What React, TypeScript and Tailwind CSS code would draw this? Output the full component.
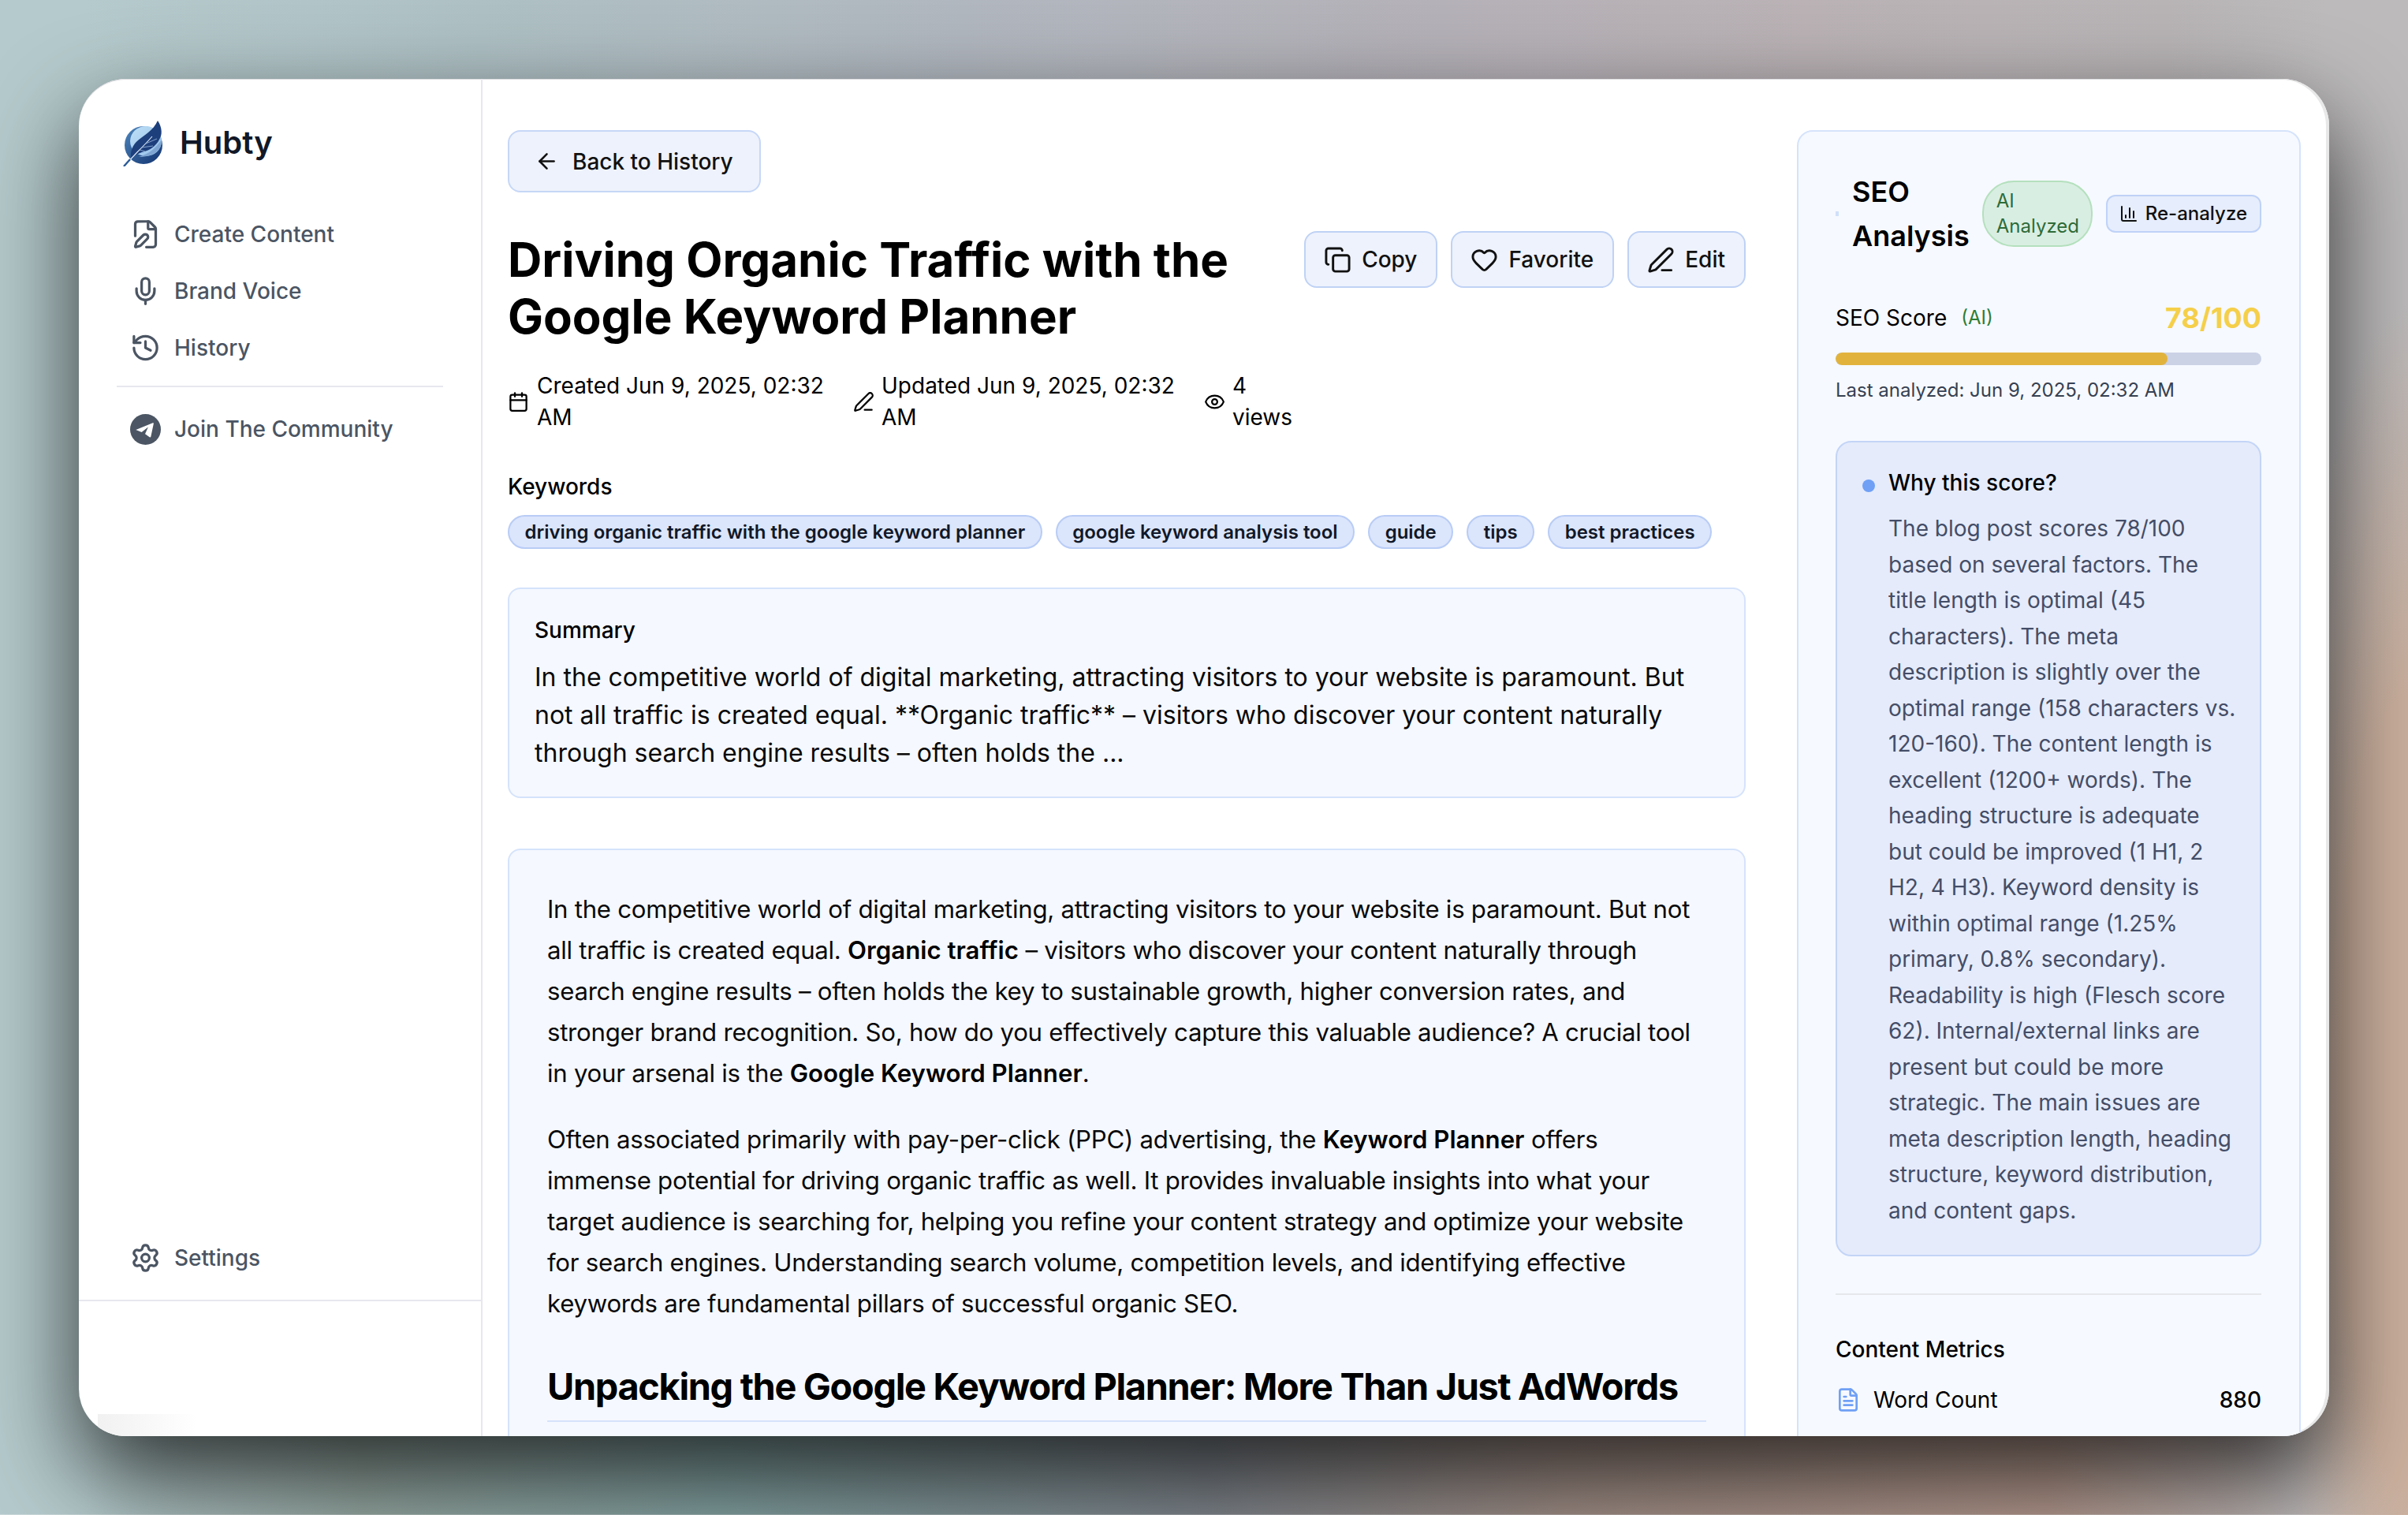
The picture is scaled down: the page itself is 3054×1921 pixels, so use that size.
import React from 'react';
import {
  ArrowLeft,
  Calendar,
  ChartColumn,
  Copy,
  Eye,
  FilePen,
  FileText,
  Heart,
  History,
  Mic,
  PenLine,
  Settings,
} from 'lucide-react';

const keywords = [
  'driving organic traffic with the google keyword planner',
  'google keyword analysis tool',
  'guide',
  'tips',
  'best practices',
];

const Logo = () => (
  <svg viewBox="0 0 60 60" className="w-[60px] h-[60px]">
    <defs>
      <linearGradient id="ring" x1="0" y1="0" x2="1" y2="1">
        <stop offset="0" stopColor="#4f86bd" />
        <stop offset="1" stopColor="#123470" />
      </linearGradient>
      <linearGradient id="sky" x1="0" y1="0" x2="1" y2="1">
        <stop offset="0" stopColor="#bfe0f7" />
        <stop offset="1" stopColor="#93bfe9" />
      </linearGradient>
    </defs>
    <circle cx="32" cy="33" r="24" fill="url(#ring)" />
    <ellipse cx="35" cy="28" rx="20" ry="19" fill="url(#sky)" />
    <path d="M55 26C56 38 46 48 26 48C40 44 48 36 55 26Z" fill="#7fa6d2" />
    <path d="M50 2C56 11 56 20 52 26C48 34 40 40 30 42C25 44 21 46 16 50C15 41 18 33 25 27C33 20 44 15 50 2Z" fill="#1d3f7c" />
    <path d="M7 60L24 42C30 36 36 30 43 22" fill="none" stroke="#e4eef8" strokeWidth="1.1" />
    <path d="M30 36L44 34M35 31L49 25M27 39L34 41" fill="none" stroke="#9dbbdf" strokeWidth="0.8" />
    <path d="M7 60L15 51" fill="none" stroke="#2b5a98" strokeWidth="2.4" />
  </svg>
);

const NavItem = ({ icon, label }: { icon: React.ReactNode; label: string }) => (
  <div className="flex items-center gap-[17px] h-[72px] pl-[17px] text-[28px] font-medium text-[#4b5563]">
    <span className="w-[39px] flex justify-center">{icon}</span>
    {label}
  </div>
);

const ActionButton = ({ icon, label }: { icon: React.ReactNode; label: string }) => (
  <button className="flex items-center gap-[13px] h-[72px] pl-[23px] pr-[24px] bg-[#eef2fc] border-2 border-[#bfd2f5] rounded-[16px] text-[28px] font-medium text-[#111]">
    {icon}
    {label}
  </button>
);

export default function App() {
  return (
    <div className="w-[3054px] h-[1921px] p-[100px] font-['Inter',sans-serif] overflow-hidden [background:radial-gradient(ellipse_170px_1000px_at_100%_72%,#cbb09e_0%,#cbb09e_50%,transparent_100%),linear-gradient(90deg,#b5cacc_0%,#b5cacc_3.5%,#aec0c4_20%,#b1b7bf_40%,#b5b1b8_60%,#bab2b5_75%,#b8b4b6_90%,#bcbabb_96.5%,#bcbabb_100%)_top/100%_51%_no-repeat,linear-gradient(90deg,#b5cacc_0%,#b5cacc_3.5%,#98aba5_15%,#84a3a3_30%,#80878e_50%,#a29088_65%,#b59a8f_85%,#bcbabb_96.5%,#bcbabb_100%)_bottom/100%_51%_no-repeat]">
      <div className="relative flex h-[1721px] w-[2854px] overflow-hidden rounded-[60px] bg-white shadow-[inset_-4px_0_0_#e8e8e8,inset_0_1px_0_#dcdce0,0_50px_120px_rgba(0,0,0,0.75)]">
        {/* Sidebar */}
        <aside className="flex flex-col w-[512px] shrink-0 border-r-2 border-[#e7e8ef]">
          <div className="flex items-center h-[161px] pl-[50px]">
            <Logo />
            <span className="ml-[18px] text-[40px] font-semibold text-[#111827]">Hubty</span>
          </div>
          <nav className="flex flex-col flex-1 px-[48px]">
            <NavItem icon={<FilePen size={40} strokeWidth={2} />} label="Create Content" />
            <NavItem icon={<Mic size={40} strokeWidth={2} />} label="Brand Voice" />
            <NavItem icon={<History size={40} strokeWidth={2} />} label="History" />
            <div className="h-[2px] mt-[12px] mb-[17px] bg-[#e7e8ef]" />
            <NavItem
              icon={
                <svg viewBox="0 0 40 40" className="w-[39px] h-[39px]">
                  <circle cx="20" cy="20" r="20" fill="#4b5563" />
                  <path d="M7.5 20.5L29.5 11.5C30.3 11.2 30.8 11.8 30.6 12.6L27 29.5C26.8 30.4 26 30.5 25.3 30L19.5 25.8L23.5 17L15 23.5Z" fill="#fff" />
                </svg>
              }
              label="Join The Community"
            />
            <div className="flex-1" />
            <NavItem icon={<Settings size={40} strokeWidth={2} />} label="Settings" />
          </nav>
          <div className="h-[173px] mt-[17px] border-t-2 border-[#e7e8ef]" />
        </aside>

        {/* Main */}
        <main className="w-[1602px] shrink-0 pl-[32px] pt-[65px] text-black">
          <button className="flex items-center gap-[17px] h-[79px] pl-[32px] pr-[33px] bg-[#eef2fc] border-2 border-[#c6d7f7] rounded-[16px] text-[28px] font-medium text-[#111]">
            <ArrowLeft size={31} strokeWidth={2} />
            Back to History
          </button>

          <div className="flex justify-between items-start mt-[49px]">
            <h1 className="text-[60px] leading-[72px] font-bold w-[980px]">
              Driving Organic Traffic with the Google Keyword Planner
            </h1>
            <div className="flex gap-[17px]">
              <ActionButton icon={<Copy size={35} strokeWidth={2} />} label="Copy" />
              <ActionButton icon={<Heart size={35} strokeWidth={2} />} label="Favorite" />
              <ActionButton icon={<PenLine size={35} strokeWidth={2} />} label="Edit" />
            </div>
          </div>

          <div className="flex items-center gap-[32px] mt-[32px] text-[28px] leading-[40px]">
            <div className="flex items-center gap-[10px]">
              <Calendar size={27} strokeWidth={2} className="shrink-0" />
              <span className="w-[369px]">Created Jun 9, 2025, 02:32 AM</span>
            </div>
            <div className="flex items-center gap-[9px]">
              <PenLine size={27} strokeWidth={2} className="shrink-0" />
              <span className="w-[377px]">Updated Jun 9, 2025, 02:32 AM</span>
            </div>
            <div className="flex items-center gap-[9px]">
              <Eye size={27} strokeWidth={2} className="shrink-0" />
              <span className="w-[78px]">4 views</span>
            </div>
          </div>

          <div className="mt-[48px] text-[28px] leading-[40px] font-medium">Keywords</div>
          <div className="flex gap-[17px] mt-[16px]">
            {keywords.map((k) => (
              <span
                key={k}
                className="h-[43px] px-[19.5px] flex items-center bg-[#dbe5fc] border-2 border-[#b8ccf5] rounded-full text-[24px] font-semibold text-[#111827] whitespace-nowrap"
              >
                {k}
              </span>
            ))}
          </div>

          <section className="mt-[49px] w-[1570px] px-[32px] pt-[32px] pb-[31px] bg-[#f5f8ff] border-2 border-[#d5e3fb] rounded-[16px]">
            <div className="text-[28px] leading-[40px] font-medium">Summary</div>
            <p className="mt-[16px] text-[32px] leading-[48px] text-[#0a0a0a]">
              In the competitive world of digital marketing, attracting visitors to your website is paramount. But not all traffic is created equal. **Organic traffic** – visitors who discover your content naturally through search engine results – often holds the ...
            </p>
          </section>

          <article className="mt-[64px] w-[1570px] h-[800px] px-[48px] pt-[49px] bg-[#f5f8ff] border-2 border-[#d5e3fb] rounded-[16px] text-[31.2px] leading-[52px] tracking-[-0.27px] text-[#0a0a0a]">
            <p>
              In the competitive world of digital marketing, attracting visitors to your website is paramount. But not all traffic is created equal. <strong className="font-semibold tracking-normal text-black">Organic traffic</strong> – visitors who discover your content naturally through search engine results – often holds the key to sustainable growth, higher conversion rates, and stronger brand recognition. So, how do you effectively capture this valuable audience? A crucial tool in your arsenal is the <strong className="font-semibold tracking-normal text-black">Google Keyword Planner</strong>.
            </p>
            <p className="mt-[32px]">
              Often associated primarily with pay-per-click (PPC) advertising, the <strong className="font-semibold tracking-normal text-black">Keyword Planner</strong> offers immense potential for driving organic traffic as well. It provides invaluable insights into what your target audience is searching for, helping you refine your content strategy and optimize your website for search engines. Understanding search volume, competition levels, and identifying effective keywords are fundamental pillars of successful organic SEO.
            </p>
            <h2 className="mt-[49px] pb-[13px] text-[46.8px] leading-[60px] tracking-[-1.3px] font-bold text-black border-b-2 border-[#d5e3fb] whitespace-nowrap">
              Unpacking the Google Keyword Planner: More Than Just AdWords
            </h2>
          </article>
        </main>

        {/* SEO panel */}
        <section className="w-[639px] h-[1800px] shrink-0 mt-[65px] ml-[65px] pl-[47px] pr-[48px] pt-[48px] bg-[#f6f9ff] border-2 border-[#d5e3fb] rounded-[20px] text-black">
          <div className="flex items-center h-[112px]">
            <span className="w-[4px] h-[6px] bg-[#cfe0f8]" />
            <h2 className="ml-[17px] w-[165px] text-[36px] leading-[56px] font-semibold">SEO Analysis</h2>
            <span className="w-[140px] h-[84px] shrink-0 pl-[16px] pr-[8px] flex items-center bg-[#d9eee2] border-2 border-[#b4e0bd] rounded-[40px] text-[24px] leading-[32px] text-[#2e6b38]">
              AI Analyzed
            </span>
            <button className="ml-[17px] flex items-center gap-[9px] h-[48px] pl-[15px] pr-[16px] bg-[#e6edfc] border-2 border-[#bfd2f7] rounded-[12px] text-[24px] font-medium text-[#111] whitespace-nowrap">
              <ChartColumn size={24} strokeWidth={2} />
              Re-analyze
            </button>
          </div>

          <div className="flex items-center justify-between mt-[48px] h-[56px]">
            <div className="flex items-center gap-[18px]">
              <span className="text-[28px]">SEO Score</span>
              <span className="text-[24px] text-[#2e7d32]">(AI)</span>
            </div>
            <span className="text-[36px] font-bold text-[#f5cf4a]">78/100</span>
          </div>

          <div className="mt-[16px] h-[16px] rounded-full bg-[#cbd2e6] overflow-hidden">
            <div className="h-full w-[78%] rounded-full bg-[#e2b33c]" />
          </div>
          <div className="mt-[16px] text-[24px] leading-[32px] text-[#374151]">
            Last analyzed: Jun 9, 2025, 02:32 AM
          </div>

          <div className="mt-[48px] pl-[32px] pr-[26px] pt-[31px] pb-[33px] flex gap-[17px] bg-[#e5ebfb] border-2 border-[#c3d5f7] rounded-[20px]">
            <span className="w-[16px] h-[16px] mt-[16px] shrink-0 rounded-full bg-[#6fa0f5]" />
            <div>
              <div className="text-[28px] leading-[40px] font-medium">Why this score?</div>
              <p className="mt-[16px] text-[28px] leading-[45.5px] text-[#444d66]">
                The blog post scores 78/100 based on several factors. The title length is optimal (45 characters). The meta description is slightly over the optimal range (158 characters vs. 120-160). The content length is excellent (1200+ words). The heading structure is adequate but could be improved (1 H1, 2 H2, 4 H3). Keyword density is within optimal range (1.25% primary, 0.8% secondary). Readability is high (Flesch score 62). Internal/external links are present but could be more strategic. The main issues are meta description length, heading structure, keyword distribution, and content gaps.
              </p>
            </div>
          </div>

          <div className="mt-[47px] h-[2px] bg-[#e5e7eb]" />
          <div className="mt-[49px] text-[28px] leading-[40px] font-medium">Content Metrics</div>
          <div className="flex items-center justify-between mt-[24px] text-[28px] leading-[40px]">
            <div className="flex items-center gap-[16px]">
              <FileText size={32} strokeWidth={2} className="text-[#6fa0f5]" />
              Word Count
            </div>
            <span className="font-medium">880</span>
          </div>
        </section>

        <div className="absolute left-[24px] bottom-0 w-[126px] h-[28px] bg-gradient-to-r from-[#f1f1f1] to-white" />
      </div>
    </div>
  );
}
